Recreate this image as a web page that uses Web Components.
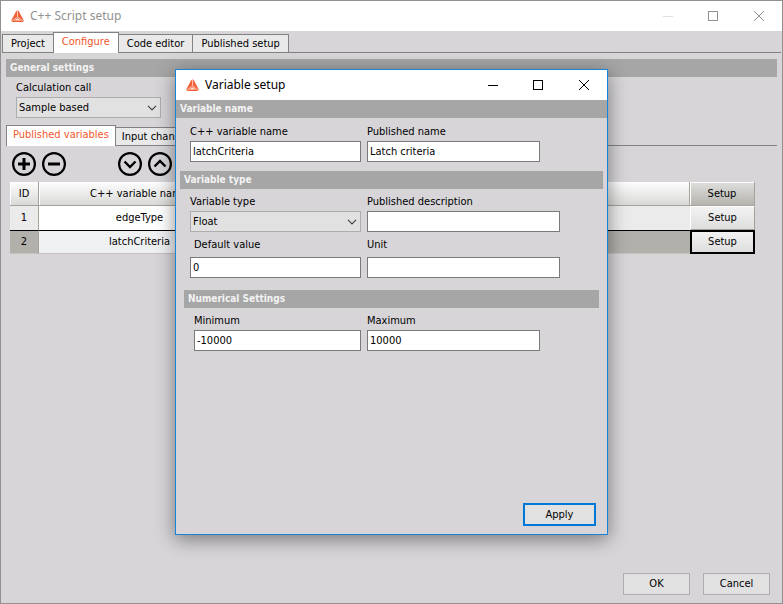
<!DOCTYPE html>
<html lang="en">
<head>
<meta charset="utf-8">
<title>C++ Script setup</title>
<style>
	body {
		margin: 0;
		position: relative;
		color: #000000;
		font: 11px/14px Tahoma, "DejaVu Sans Condensed", sans-serif;
	}

	.overlay {
		position: absolute;
		inset: 0;
		display: grid;
		place-items: center;
	}

	script-window {
		min-height: 100vh;
		--frame: #919191;
		--title: #919191;
		--min: #e3e3e3;
	}

	.overlay script-window {
		width: 433px;
		min-height: 466px;
		--frame: #1883d7;
		--title: #000000;
		--min: #000000;
		box-shadow: 0 4px 18px rgba(0, 0, 0, .45);
	}

	.main-tabs {
		margin: 1px 1px 0;
		--tab-padding: 8px;
	}

	.general {
		padding: 6px 5px 0;
	}

	.calc {
		display: block;
		width: 145px;
		padding: 4px 0 7px 10px;
	}

	.variables {
		padding: 0 27px 0 9px;
	}

	.fields {
		display: grid;
		grid-template-columns: 171px 193px;
		column-gap: 6px;
		row-gap: 6px;
		padding: 6px 14px 12px;
	}

	.fields.names {
		padding-top: 7px;
		padding-bottom: 9px;
	}

	.fields.inset {
		grid-template-columns: 167px 193px;
		padding-left: 18px;
	}

	.fields .short {
		width: 173px;
	}
</style>
</head>
<body>

<script-window heading="C++ Script setup">
	<tab-strip class="main-tabs" tabs="Project|Configure|Code editor|Published setup" selected="1"></tab-strip>
	<div class="general">
		<section-bar>General settings</section-bar>
		<form-field class="calc" label="Calculation call" value="Sample based" type="select"></form-field>
		<tab-strip tabs="Published variables|Input channels" selected="0"></tab-strip>
	</div>
	<div class="variables">
		<variable-toolbar></variable-toolbar>
		<variable-table></variable-table>
	</div>
	<push-button slot="actions">OK</push-button>
	<push-button slot="actions">Cancel</push-button>
</script-window>

<div class="overlay">
	<script-window heading="Variable setup" dialog>
		<section-bar>Variable name</section-bar>
		<div class="fields names">
			<form-field label="C++ variable name" value="latchCriteria"></form-field>
			<form-field class="short" label="Published name" value="Latch criteria"></form-field>
		</div>
		<section-bar style="margin: 0 4px">Variable type</section-bar>
		<div class="fields">
			<form-field label="Variable type" value="Float" type="select"></form-field>
			<form-field label="Published description"></form-field>
			<form-field label="Default value" value="0" tall indent></form-field>
			<form-field label="Unit" tall></form-field>
		</div>
		<section-bar style="margin: 0 8px">Numerical Settings</section-bar>
		<div class="fields inset">
			<form-field label="Minimum" value="-10000"></form-field>
			<form-field class="short" label="Maximum" value="10000"></form-field>
		</div>
		<push-button slot="actions" primary>Apply</push-button>
	</script-window>
</div>

<script>
// WINDOW FRAME: title bar, content, action buttons
class ScriptWindow extends HTMLElement {
	constructor() {
		super();
		this.attachShadow({ mode: "open" });
	}

	connectedCallback() {
		//prettier-ignore
		this.shadowRoot.innerHTML = //html
		`
		<style>
			:host {
				display: flex;
				flex-direction: column;
				box-sizing: border-box;
				border: 1px solid var(--frame);
				background: #d7d5d8;
			}
			header {
				display: flex;
				align-items: center;
				height: 30px;
				padding-left: 10px;
				background: #ffffff;
				color: var(--title);
			}
			h1 {
				flex: 1;
				margin: 0 0 0 6px;
				font: 12px/16px "Segoe UI", "Noto Sans", sans-serif;
			}
			header button {
				width: 46px;
				height: 28px;
				padding: 0;
				border: 0;
				background: none;
				color: inherit;
			}
			header button:first-of-type {
				color: var(--min);
				margin-right: -1px;
			}
			svg { display: block; margin: auto; }
			header > svg { margin: 0; }
			footer {
				display: flex;
				justify-content: flex-end;
				gap: 13px;
				margin-top: auto;
				padding: 8px 12px;
			}
			:host([dialog]) footer { padding: 8px 11px; }
		</style>
		<header>
			<svg width="13" height="13" viewBox="0 0 13 13" aria-hidden="true">
				<path d="M5 1.5Q6.500 -.5 8 1.5L12.500 10Q13 12 11 12H2Q0 12 .5 10Z" fill="#f2623a"/>
				<path d="M6.500 1V7M6.500 7L1 11M6.500 7L12 11" fill="none" stroke="#ffc9b8" stroke-width=".9"/>
				<path d="M3 10.500L6.500 8.200L10 10.500Z" fill="#ffe3da"/>
			</svg>
			<h1>${this.getAttribute("heading")}</h1>
			<button aria-label="Minimize"><svg width="10" height="10"><path d="M0 5.500H10" stroke="currentColor"/></svg></button>
			<button aria-label="Maximize"><svg width="10" height="10"><rect x=".5" y=".5" width="9" height="9" fill="none" stroke="currentColor"/></svg></button>
			<button aria-label="Close"><svg width="10" height="10"><path d="M0 0L10 10M10 0L0 10" stroke="currentColor"/></svg></button>
		</header>
		<slot></slot>
		<footer><slot name="actions"></slot></footer>
		`;
	}
}
window.customElements.define("script-window", ScriptWindow);

// TABS
class TabStrip extends HTMLElement {
	constructor() {
		super();
		this.attachShadow({ mode: "open" });
	}

	connectedCallback() {
		const selected = Number(this.getAttribute("selected"));
		const tabs = this.getAttribute("tabs").split("|");
		//prettier-ignore
		this.shadowRoot.innerHTML = //html
		`
		<style>
			:host {
				display: flex;
				align-items: flex-end;
				height: 20px;
				border-bottom: 1px solid #828282;
			}
			button {
				box-sizing: border-box;
				height: 19px;
				margin: 0 -1px -1px 0;
				padding: 0 var(--tab-padding, 6px);
				border: 1px solid #828282;
				background: #e9e9e9;
				color: #000000;
				font: inherit;
				white-space: nowrap;
			}
			button[aria-selected="true"] {
				height: 21px;
				padding-bottom: 2px;
				border-bottom: 0;
				background: #ffffff;
				color: #f2562c;
			}
		</style>
		${tabs.map((tab, i) => `<button role="tab" aria-selected="${i === selected}">${tab}</button>`).join("")}
		`;
		this.setAttribute("role", "tablist");
	}
}
window.customElements.define("tab-strip", TabStrip);

// GREY HEADING BAR
class SectionBar extends HTMLElement {
	constructor() {
		super();
		this.attachShadow({ mode: "open" });
		//prettier-ignore
		this.shadowRoot.innerHTML = //html
		`
		<style>
			:host {
				display: block;
				padding: 2px 4px;
				background: #a6a6a6;
				color: #f3f3f3;
				font-size: 10px;
				font-weight: bold;
			}
		</style>
		<slot></slot>
		`;
	}
}
window.customElements.define("section-bar", SectionBar);

// LABEL + TEXT BOX OR DROP-DOWN
class FormField extends HTMLElement {
	constructor() {
		super();
		this.attachShadow({ mode: "open" });
	}

	connectedCallback() {
		const value = this.getAttribute("value") || "";
		//prettier-ignore
		this.shadowRoot.innerHTML = //html
		`
		<style>
			:host { display: block; }
			label { display: block; height: 16px; white-space: nowrap; }
			:host([tall]) label { height: 19px; }
			:host([indent]) label { padding-left: 4px; }
			.box { display: grid; align-items: center; }
			input, select {
				grid-area: 1 / 1;
				box-sizing: border-box;
				width: 100%;
				height: 21px;
				margin: 0;
				padding: 0 2px;
				border: 1px solid #7a7a7a;
				border-radius: 0;
				background: #ffffff;
				color: #000000;
				font: inherit;
			}
			select {
				appearance: none;
				border-color: #adadad;
				background: #e1e1e1;
			}
			svg {
				grid-area: 1 / 1;
				justify-self: end;
				margin-right: 4px;
				pointer-events: none;
			}
		</style>
		<label for="control">${this.getAttribute("label")}</label>
		<div class="box">
		${(this.getAttribute("type") == "select")
			? `<select id="control"><option>${value}</option></select>
			<svg width="10" height="6"><path d="M1 .8L5 4.800L9 .8" fill="none" stroke="#444444" stroke-width="1.200"/></svg>`
			: `<input id="control" type="text" value="${value}">`}
		</div>
		`;
	}
}
window.customElements.define("form-field", FormField);

// ADD / REMOVE / MOVE DOWN / MOVE UP
class VariableToolbar extends HTMLElement {
	constructor() {
		super();
		this.attachShadow({ mode: "open" });
		const icons = [
			["Add", "M12 6V18M6 12H18", 3],
			["Remove", "M6 12H18", 3],
			["Move down", "M6.500 9.500L12 15L17.500 9.500", 2.4],
			["Move up", "M6.500 14.500L12 9L17.500 14.500", 2.4],
		];
		//prettier-ignore
		this.shadowRoot.innerHTML = //html
		`
		<style>
			:host { display: flex; gap: 6px; padding: 6px 2px; }
			button { padding: 0; border: 0; background: none; }
			button:nth-of-type(3) { margin-left: 46px; }
			svg { display: block; }
		</style>
		${icons.map(([name, path, width]) => `
			<button aria-label="${name}"><svg width="24" height="24" fill="none" stroke="#000000">
				<circle cx="12" cy="12" r="10.900" stroke-width="2.200"/>
				<path d="${path}" stroke-width="${width}"/>
			</svg></button>`).join("")}
		`;
	}
}
window.customElements.define("variable-toolbar", VariableToolbar);

// PUBLISHED VARIABLES
class VariableTable extends HTMLElement {
	constructor() {
		super();
		this.attachShadow({ mode: "open" });
		const rows = [[1, "edgeType"], [2, "latchCriteria"]];
		//prettier-ignore
		this.shadowRoot.innerHTML = //html
		`
		<style>
			:host { display: block; }
			table {
				width: 100%;
				table-layout: fixed;
				border-collapse: separate;
				border-spacing: 0;
				text-align: center;
			}
			.id { width: 29px; }
			.name { width: 201px; }
			.setup { width: 65px; }
			th, td {
				box-sizing: border-box;
				height: 24px;
				padding: 0;
				font-weight: normal;
			}
			th {
				border: solid #a5a39a;
				border-width: 0 1px 1px 0;
				background: linear-gradient(#fdfdfd, #d9d9d7);
				box-shadow: inset 1px 1px #ffffff;
			}
			th:last-child { background: linear-gradient(#dededc, #b5b4ae); }
			td { background: #ebebeb; }
			td:first-child { border-right: 1px solid #a5a39a; }
			td:nth-child(2) { background: #ffffff; }
			.current td { background: #b1b0ab; border-top: 1px solid #000000; border-bottom: 1px solid #c4c3c0; }
			.current td:nth-child(2) { background: #eef0f2; }
			.current td:last-child { border: 0; }
			button {
				box-sizing: border-box;
				display: block;
				width: 100%;
				height: 24px;
				padding: 0;
				border: 1px solid;
				border-color: #ffffff #a5a39a #a5a39a #ffffff;
				background: linear-gradient(#f2f2f2, #dedede);
				color: #000000;
				font: inherit;
			}
			.current button { border: 2px solid #000000; }
		</style>
		<table>
			<colgroup><col class="id"><col class="name"><col><col class="setup"></colgroup>
			<thead>
				<tr><th>ID</th><th>C++ variable name</th><th></th><th>Setup</th></tr>
			</thead>
			<tbody>
			${rows.map(([id, name]) => `
				<tr class="${id == 2 ? "current" : ""}"><td>${id}</td><td>${name}</td><td></td><td><button>Setup</button></td></tr>`).join("")}
			</tbody>
		</table>
		`;
	}
}
window.customElements.define("variable-table", VariableTable);

// BUTTON
class PushButton extends HTMLElement {
	constructor() {
		super();
		this.attachShadow({ mode: "open" });
		//prettier-ignore
		this.shadowRoot.innerHTML = //html
		`
		<style>
			:host { display: block; }
			button {
				box-sizing: border-box;
				display: block;
				min-width: 67px;
				height: 22px;
				border: 1px solid #adadad;
				background: #e1e1e1;
				color: #000000;
				font: inherit;
			}
			:host([primary]) button {
				min-width: 73px;
				height: 23px;
				border: 2px solid #0078d7;
			}
		</style>
		<button><slot></slot></button>
		`;
	}
}
window.customElements.define("push-button", PushButton);
</script>
</body>
</html>
